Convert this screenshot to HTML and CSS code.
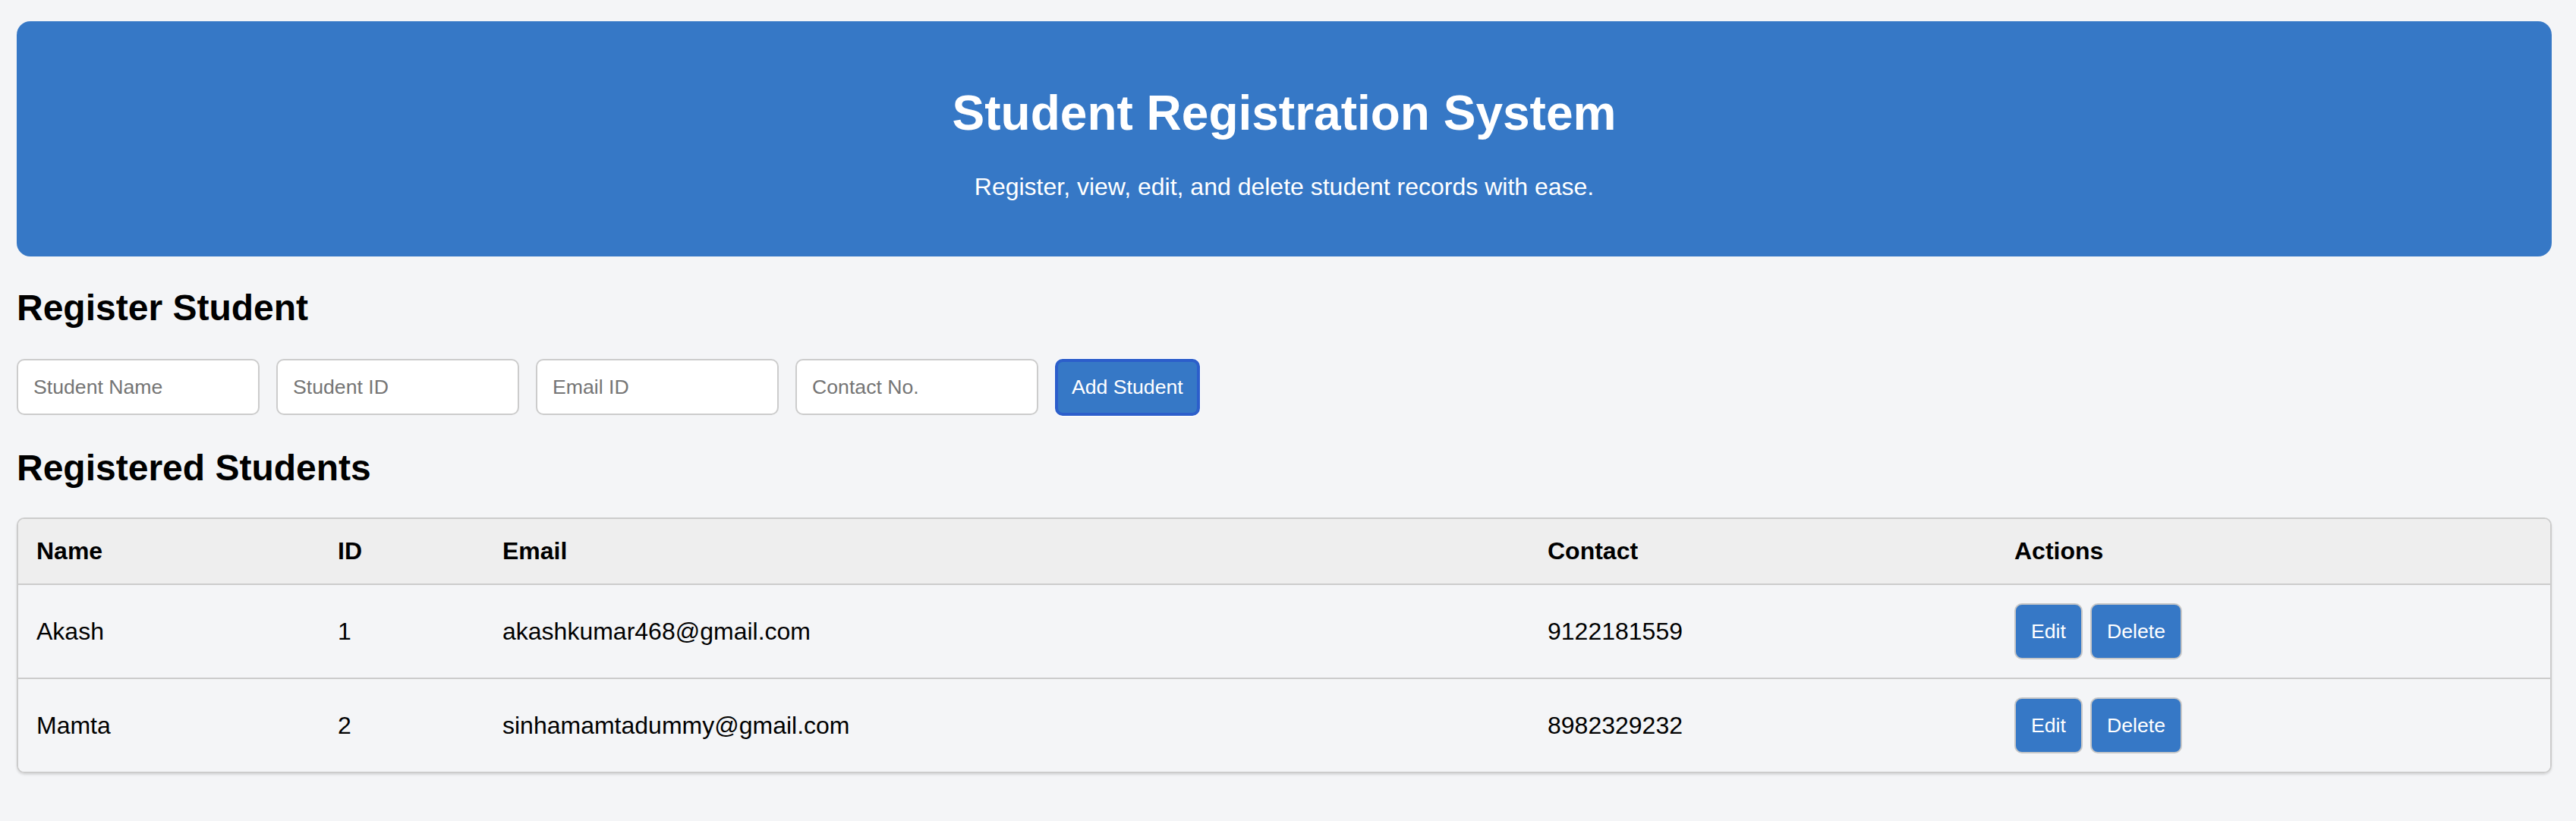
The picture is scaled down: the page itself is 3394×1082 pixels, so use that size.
FILE: index.html
```html
<!DOCTYPE html>
<html lang="en">
<head>
<meta charset="utf-8">
<title>Student Registration System</title>
<link rel="stylesheet" href="styles.css">
</head>
<body>
  <header class="hero">
    <h1 class="hero-title">Student Registration System</h1>
    <p class="hero-sub">Register, view, edit, and delete student records with ease.</p>
  </header>

  <h2 class="section-title">Register Student</h2>
  <form class="reg-form">
    <input class="field" type="text" placeholder="Student Name">
    <input class="field" type="text" placeholder="Student ID">
    <input class="field" type="text" placeholder="Email ID">
    <input class="field" type="text" placeholder="Contact No.">
    <button class="btn btn-add" type="button">Add Student</button>
  </form>

  <h2 class="section-title section-title-2">Registered Students</h2>
  <table class="students">
    <colgroup>
      <col class="c-name">
      <col class="c-id">
      <col class="c-email">
      <col class="c-contact">
      <col class="c-actions">
    </colgroup>
    <thead>
      <tr>
        <th>Name</th>
        <th>ID</th>
        <th>Email</th>
        <th>Contact</th>
        <th>Actions</th>
      </tr>
    </thead>
    <tbody>
      <tr>
        <td>Akash</td>
        <td>1</td>
        <td>akashkumar468@gmail.com</td>
        <td>9122181559</td>
        <td><div class="actions"><button class="btn btn-row" type="button">Edit</button><button class="btn btn-row" type="button">Delete</button></div></td>
      </tr>
      <tr>
        <td>Mamta</td>
        <td>2</td>
        <td>sinhamamtadummy@gmail.com</td>
        <td>8982329232</td>
        <td><div class="actions"><button class="btn btn-row" type="button">Edit</button><button class="btn btn-row" type="button">Delete</button></div></td>
      </tr>
    </tbody>
  </table>
</body>
</html>
```

FILE: styles.css
```css
* { box-sizing: border-box; }

html, body {
  background: #f4f5f7;
}

body {
  margin: 0;
  padding: 28px 32px 40px 22px;
  font-family: "Liberation Sans", Arial, Helvetica, sans-serif;
  font-size: 32px;
  color: #000;
}

.hero {
  background: #3678c6;
  color: #fff;
  border-radius: 18px;
  padding: 84px 20px 73px;
  text-align: center;
}

.hero-title {
  margin: 0 0 42px;
  font-size: 64px;
  font-weight: bold;
  line-height: normal;
}

.hero-sub {
  margin: 0;
  font-size: 32px;
  line-height: normal;
}

.section-title {
  margin: 40px 0 40px;
  font-size: 48px;
  font-weight: bold;
  line-height: normal;
}

.section-title-2 {
  margin: 41px 0 38px;
}

.reg-form {
  display: flex;
  gap: 22px;
  align-items: stretch;
  margin: 0;
}

.field {
  width: 320px;
  height: 74px;
  padding: 20px;
  border: 2px solid #cccccc;
  border-radius: 10px;
  background: #fff;
  font-family: "Liberation Sans", Arial, Helvetica, sans-serif;
  font-size: 26.67px;
  color: #000;
  outline: none;
}

.field::placeholder {
  color: #757575;
}

.btn {
  font-family: "Liberation Sans", Arial, Helvetica, sans-serif;
  font-size: 26.67px;
  line-height: normal;
  color: #fff;
  background: #3678c6;
  border-radius: 10px;
  cursor: pointer;
}

.btn-add {
  height: 75px;
  padding: 18px 20px;
  border: 2px solid #2c5ecb;
  box-shadow: inset 0 0 0 2px #2c5ecb, 0 0 0 1px #ffffff;
}

.students {
  width: 100%;
  table-layout: fixed;
  border-collapse: separate;
  border-spacing: 0;
  border: 2px solid #cccccc;
  border-radius: 10px;
  box-shadow: 0 2px 3px rgba(0, 0, 0, 0.12);
  overflow: hidden;
}

.c-name { width: 397px; }
.c-id { width: 217px; }
.c-email { width: 1377px; }
.c-contact { width: 615px; }
.c-actions { width: 730px; }

.students th,
.students td {
  padding: 24px;
  text-align: left;
  vertical-align: middle;
  font-size: 32px;
  line-height: normal;
}

.students th {
  background: #eeeeee;
  font-weight: bold;
  border-bottom: 2px solid #cccccc;
}

.students td {
  background: #f4f5f7;
  border-bottom: 2px solid #cccccc;
}

.students tbody tr:last-child td {
  border-bottom: none;
}

.actions {
  display: flex;
  gap: 10px;
}

.btn-row {
  height: 74px;
  padding: 20px;
  border: 2px solid #c8c8c8;
}
```
